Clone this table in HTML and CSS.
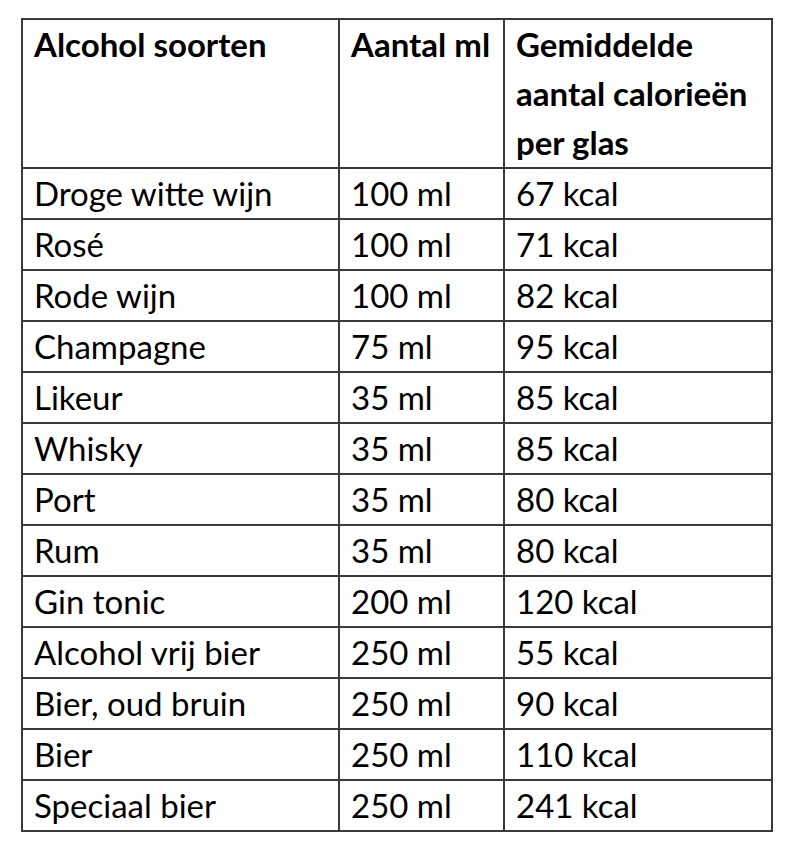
FILE: index.html
```html
<!DOCTYPE html>
<html lang="nl">
<head>
<meta charset="utf-8">
<title>Alcohol calorieën</title>
<link rel="stylesheet" href="styles.css">
</head>
<body>
<table class="kcal-table">
  <colgroup>
    <col class="c1"><col class="c2"><col class="c3">
  </colgroup>
  <thead>
    <tr>
      <th>Alcohol soorten</th>
      <th>Aantal ml</th>
      <th>Gemiddelde<br>aantal calorieën<br>per glas</th>
    </tr>
  </thead>
  <tbody>
    <tr><td>Droge witte wijn</td><td>100 ml</td><td>67 kcal</td></tr>
    <tr><td>Rosé</td><td>100 ml</td><td>71 kcal</td></tr>
    <tr><td>Rode wijn</td><td>100 ml</td><td>82 kcal</td></tr>
    <tr><td>Champagne</td><td>75 ml</td><td>95 kcal</td></tr>
    <tr><td>Likeur</td><td>35 ml</td><td>85 kcal</td></tr>
    <tr><td>Whisky</td><td>35 ml</td><td>85 kcal</td></tr>
    <tr><td>Port</td><td>35 ml</td><td>80 kcal</td></tr>
    <tr><td>Rum</td><td>35 ml</td><td>80 kcal</td></tr>
    <tr><td>Gin tonic</td><td>200 ml</td><td>120 kcal</td></tr>
    <tr><td>Alcohol vrij bier</td><td>250 ml</td><td>55 kcal</td></tr>
    <tr><td>Bier, oud bruin</td><td>250 ml</td><td>90 kcal</td></tr>
    <tr><td>Bier</td><td>250 ml</td><td>110 kcal</td></tr>
    <tr><td>Speciaal bier</td><td>250 ml</td><td>241 kcal</td></tr>
  </tbody>
</table>
</body>
</html>
```

FILE: styles.css
```css
html, body {
  margin: 0;
  padding: 0;
  background: #ffffff;
}

body {
  padding: 18px 0 0 21px;
  font-family: Lato, "Open Sans", sans-serif;
  color: #000;
}

.kcal-table {
  border-collapse: collapse;
  table-layout: fixed;
  width: 750px;
}

.c1 { width: 317px; }
.c2 { width: 165px; }
.c3 { width: 268px; }

.kcal-table th,
.kcal-table td {
  border: 2px solid #3a3a3a;
  padding: 0 6px 0 11px;
  font-size: 33px;
  line-height: 49px;
  text-align: left;
  vertical-align: top;
  white-space: nowrap;
}

.kcal-table th {
  font-weight: 700;
}

.kcal-table td {
  font-weight: 400;
}
```
